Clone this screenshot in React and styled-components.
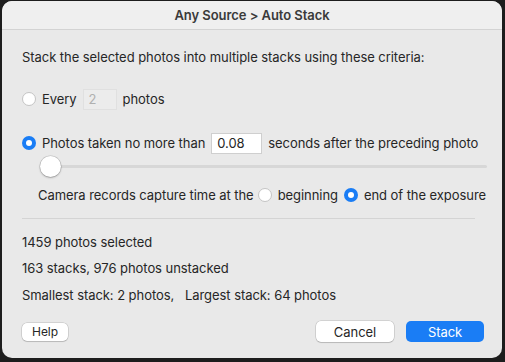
import React, { useState } from 'react';
import styled, { createGlobalStyle } from 'styled-components';

const GlobalStyle = createGlobalStyle`
  html, body {
    margin: 0;
    padding: 0;
    background: #1d1d1d;
  }
  body {
    font-family: Inter, "Liberation Sans", Arial, sans-serif;
    -webkit-font-smoothing: antialiased;
  }
`;

const Page = styled.div`
  width: 505px;
  height: 362px;
  padding: 1px 3px 4px 2px;
  box-sizing: border-box;
`;

const Dialog = styled.div`
  height: 100%;
  background: #e9e9e9;
  border-radius: 10px;
  overflow: hidden;
  display: flex;
  flex-direction: column;
  color: #262626;
  font-size: 13px;
  letter-spacing: -0.06px;
`;

const TitleBar = styled.div`
  height: 28px;
  flex: none;
  background: #efefef;
  border-bottom: 1px solid #d3d3d3;
  display: flex;
  align-items: center;
  justify-content: center;
  font-weight: 600;
  font-size: 13px;
  color: #3a3a3a;
`;

const Body = styled.div`
  flex: 1;
  padding: 17px 15px 0 20px;
  display: flex;
  flex-direction: column;
`;

const Line = styled.div`
  display: flex;
  align-items: center;
  height: 20px;
  margin-top: ${p => p.$top || 0}px;
  padding-left: ${p => p.$indent || 0}px;
  white-space: nowrap;
`;

const RadioDot = styled.span`
  width: 14px;
  height: 14px;
  box-sizing: border-box;
  border-radius: 50%;
  flex: none;
  margin-right: 6px;
  margin-left: ${p => p.$gap || 0}px;
  background: ${p => (p.$on ? '#1a7df5' : '#ffffff')};
  border: ${p => (p.$on ? 'none' : '1px solid #c4c4c4')};
  display: flex;
  align-items: center;
  justify-content: center;
  &::after {
    content: '';
    display: ${p => (p.$on ? 'block' : 'none')};
    width: 6px;
    height: 6px;
    border-radius: 50%;
    background: #fff;
  }
`;

const Field = styled.span`
  display: inline-flex;
  align-items: center;
  box-sizing: border-box;
  width: ${p => p.$w}px;
  height: 21px;
  margin: 0 6px;
  padding-left: 5px;
  background: ${p => (p.$disabled ? '#ececec' : '#ffffff')};
  border: 1px solid ${p => (p.$disabled ? '#e0e0e0' : '#cfcfcf')};
  color: ${p => (p.$disabled ? '#b0b0b0' : '#262626')};
  font-size: 13px;
`;

const SliderRow = styled.div`
  position: relative;
  height: 22px;
  margin: 3px 0 0 18px;
  width: 447px;
`;

const Track = styled.div`
  position: absolute;
  left: 0;
  right: 0;
  top: 9px;
  height: 3px;
  border-radius: 2px;
  background: #d7d7d7;
`;

const Thumb = styled.div`
  position: absolute;
  left: 0;
  top: 0;
  width: 21px;
  height: 21px;
  border-radius: 50%;
  background: #ffffff;
  box-shadow: 0 0 0 0.5px rgba(0, 0, 0, 0.18), 0 1px 2px rgba(0, 0, 0, 0.25);
`;

const Rule = styled.div`
  height: 1px;
  background: #d4d4d4;
  margin: 13px 12px 0 0;
`;

const Footer = styled.div`
  display: flex;
  align-items: center;
  padding: 0 18px 16px 20px;
`;

const Button = styled.button`
  font-family: inherit;
  letter-spacing: inherit;
  border: none;
  border-radius: 5px;
  height: ${p => (p.$small ? 18 : 21)}px;
  width: ${p => p.$w}px;
  padding: 0;
  margin-left: ${p => p.$gap || 0}px;
  background: ${p => (p.$primary ? '#1a7df5' : '#ffffff')};
  color: ${p => (p.$primary ? '#ffffff' : '#262626')};
  box-shadow: ${p =>
    p.$primary ? 'none' : '0 0 0 0.5px rgba(0,0,0,0.2), 0 1px 1px rgba(0,0,0,0.12)'};
  font-size: ${p => (p.$small ? 12 : 13)}px;
`;

const Spacer = styled.div`
  flex: 1;
`;

export default function App() {
  const [mode] = useState('time');
  const [edge] = useState('end');

  return (
    <>
      <GlobalStyle />
      <Page>
        <Dialog>
          <TitleBar>Any Source &gt; Auto Stack</TitleBar>
          <Body>
            <Line>Stack the selected photos into multiple stacks using these criteria:</Line>
            <Line $top={22}>
              <RadioDot $on={mode === 'count'} />
              Every
              <Field $w={34} $disabled>2</Field>
              photos
            </Line>
            <Line $top={24}>
              <RadioDot $on={mode === 'time'} />
              Photos taken no more than
              <Field $w={51}>0.08</Field>
              seconds after the preceding photo
            </Line>
            <SliderRow>
              <Track />
              <Thumb />
            </SliderRow>
            <Line $top={7} $indent={16}>
              Camera records capture time at the
              <RadioDot $on={edge === 'start'} $gap={4} />
              beginning
              <RadioDot $on={edge === 'end'} $gap={6} />
              end of the exposure
            </Line>
            <Rule />
            <Line $top={13}>1459 photos selected</Line>
            <Line $top={6}>163 stacks, 976 photos unstacked</Line>
            <Line $top={7}>Smallest stack: 2 photos,&nbsp;&nbsp;&nbsp;Largest stack: 64 photos</Line>
          </Body>
          <Footer>
            <Button $small $w={46}>Help</Button>
            <Spacer />
            <Button $w={78}>Cancel</Button>
            <Button $primary $w={78} $gap={12}>Stack</Button>
          </Footer>
        </Dialog>
      </Page>
    </>
  );
}
